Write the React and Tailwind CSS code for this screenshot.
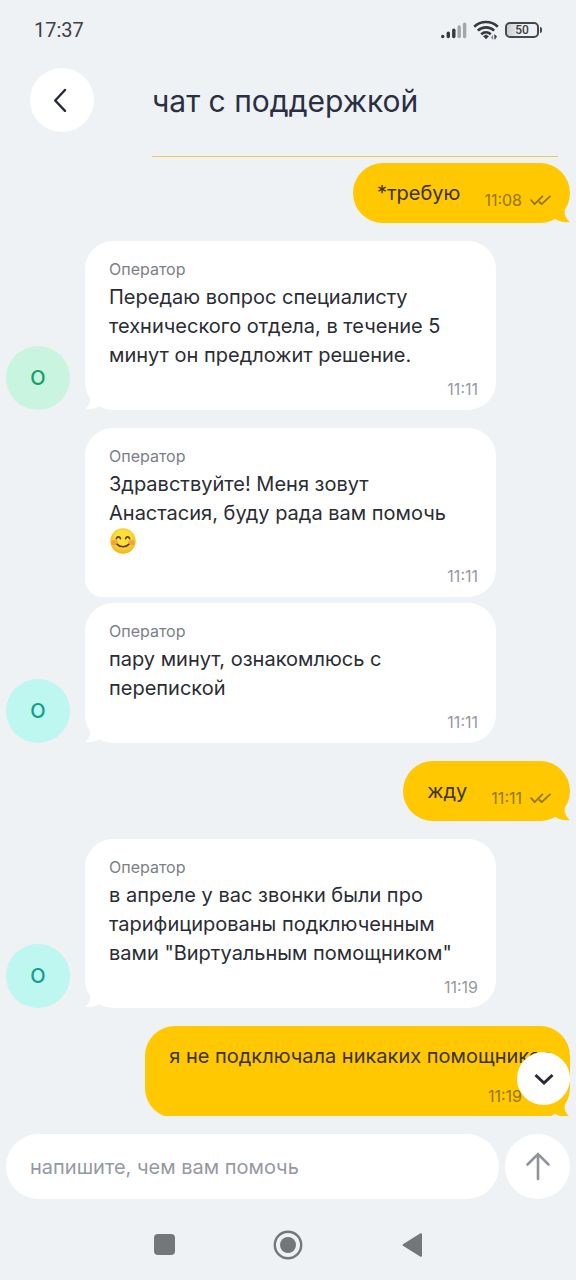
import React from "react";

function StatusBar() {
  return (
    <div className="flex h-15 items-center justify-between px-8.5 text-[#3d4146]">
      <time className="font-[Roboto,sans-serif] text-xl leading-6">17:37</time>
      <div className="flex items-center gap-1.5">
        <svg width="27" height="20" viewBox="0 0 27 20" aria-label="Сигнал" role="img">
          <g strokeWidth="3.4" strokeLinecap="round" stroke="#36393e">
            <path d="M2.7 16.4v.2" />
            <path d="M8.3 13.2v3.4" />
            <path d="M13.8 10.2v6.4" />
          </g>
          <g strokeWidth="3.4" strokeLinecap="round" stroke="#a3a6a9">
            <path d="M19.2 7v9.6" />
            <path d="M24.6 4.2v12.4" />
          </g>
        </svg>
        <svg width="26" height="20" viewBox="0 0 26 20" fill="none" stroke="#36393e" aria-label="Wi-Fi" role="img">
          <g strokeWidth="2.6">
            <path d="M1.2 6.7C7.8.5 18.2.5 24.8 6.7" />
            <path d="M4.8 10.6c4.6-4.3 11.8-4.3 16.4 0" />
            <path d="M8.2 14.2c2.8-2.5 6.8-2.5 9.6 0" />
          </g>
          <path d="M13 14.6l2.9 1.6-2.9 3-2.9-3z" fill="#36393e" stroke="none" />
          <path d="M19.6 15.2v3.4l-1.6-1.7" stroke="#8b8f93" strokeWidth="1.1" />
          <path d="M22 19.2v-3.6l1.6 1.7" strokeWidth="1.3" />
        </svg>
        <div className="flex items-center">
          <div className="flex h-4 w-8.5 items-center justify-center rounded-[5px] border-2 border-[#45494e] bg-linear-to-r from-[#cdd0d3] to-[#eef2f5] to-50% font-[Roboto,sans-serif] text-xs leading-3 font-medium">
            50
          </div>
          <div className="ml-px h-1.5 w-0.5 rounded-r bg-[#45494e]" />
        </div>
      </div>
    </div>
  );
}

function Header() {
  return (
    <header className="flex h-[97px] items-start pl-7.5 pr-4.5">
      <button aria-label="Назад" className="mt-2 flex size-16 shrink-0 items-center justify-center rounded-full bg-white">
        <svg width="24" height="24" viewBox="0 0 24 24" fill="none" stroke="#262b35" strokeWidth="2.4" strokeLinecap="round" strokeLinejoin="round">
          <path d="M15 2 5.200 12.500 15 22.800" />
        </svg>
      </button>
      <div className="ml-14.5 flex h-full flex-1 flex-col border-b border-[#efc853]">
        <h1 className="mt-[21px] text-[30px] leading-10 text-[#2b2f42]">чат с поддержкой</h1>
      </div>
    </header>
  );
}

function Tail({ side }) {
  return side === "right" ? (
    <svg className="absolute right-0 bottom-0" width="16" height="14" viewBox="0 0 16 14">
      <path d="M10.600 1V4.200C11.300 7.800 13.200 10.800 15.800 12.900 11 13.700 6 12.600 2.500 10.400L0 9V1z" fill="#ffc800" />
    </svg>
  ) : (
    <svg className="absolute bottom-0 left-0" width="16" height="14" viewBox="0 0 16 14">
      <path d="M5.400 1V4.200C4.700 7.800 2.800 10.800 .2 12.900 5 13.700 10 12.600 13.500 10.400L16 9V1z" fill="#fff" />
    </svg>
  );
}

function Checks() {
  return (
    <svg width="22" height="12" viewBox="0 0 22 12" fill="none" stroke="currentColor" strokeWidth="1.8" strokeLinecap="round" strokeLinejoin="round" aria-label="Прочитано" role="img">
      <path d="M1.200 6.200 4.600 10.200 12.400 2.400" />
      <path d="M9.400 8 11.700 10.200 20 2.400" />
    </svg>
  );
}

function Smile() {
  return (
    <svg className="ml-px inline-block size-[26px] align-text-bottom" viewBox="0 0 26 26" role="img" aria-label="😊">
      <defs>
        <radialGradient id="face" cx=".5" cy=".4" r=".6">
          <stop offset=".5" stopColor="#fddf36" />
          <stop offset="1" stopColor="#f2b11e" />
        </radialGradient>
      </defs>
      <circle cx="13" cy="13" r="12.700" fill="url(#face)" />
      <ellipse cx="4.600" cy="14.500" rx="3.200" ry="2.800" fill="#f58a3a" opacity=".65" />
      <ellipse cx="21.400" cy="14.500" rx="3.200" ry="2.800" fill="#f58a3a" opacity=".65" />
      <g fill="none" stroke="#5a3a12" strokeWidth="1.700" strokeLinecap="round">
        <path d="M6.400 10.600c.8-2.400 3.200-2.400 4 0" />
        <path d="M15.600 10.600c.8-2.400 3.200-2.400 4 0" />
        <path d="M7.200 16.400c2.900 3.100 8.700 3.100 11.600 0" />
      </g>
    </svg>
  );
}

function OperatorBubble({ time, tail, children }) {
  return (
    <article className={tail ? "relative rounded-[28px] bg-white px-6 pt-4.5 pb-[11px]" : "relative rounded-[28px] rounded-bl-[18px] bg-white px-6 pt-4.5 pb-[11px]"}>
      <div className="text-base leading-5 text-[#7b7f87]">Оператор</div>
      <p className="mt-1 text-xl leading-[29px] whitespace-pre-line text-[#2a2d33]">{children}</p>
      <div className="-mr-1.5 mt-[9px] text-right text-base leading-5 text-[#95999f]">
        <time>{time}</time>
      </div>
      {tail && <Tail side="left" />}
    </article>
  );
}

function OperatorGroup({ tone, children }) {
  return (
    <section className="flex items-end gap-[15px] pr-20 pl-1.5">
      <div className={tone === "green" ? "flex size-16 shrink-0 items-center justify-center rounded-full bg-[#c9f5e0] text-xl font-medium text-[#12a06a]" : "flex size-16 shrink-0 items-center justify-center rounded-full bg-[#bdf7ef] text-xl font-medium text-[#0f9f8c]"}>
        <span className="leading-6">О</span>
      </div>
      <div className="flex min-w-0 flex-1 flex-col gap-1.5">{children}</div>
    </section>
  );
}

function UserBubble({ time, children }) {
  return (
    <article className="relative mr-1.5 flex h-15 items-center self-end rounded-[30px] bg-[#ffc800] pr-4.5 pl-6">
      <p className="text-xl leading-7 text-[#3b3216]">{children}</p>
      <div className="mt-3.5 ml-6 flex items-center gap-2 text-base leading-5 text-[#93760f]">
        <time>{time}</time>
        <Checks />
      </div>
      <Tail side="right" />
    </article>
  );
}

export default function App() {
  return (
    <div className="flex h-dvh flex-col overflow-hidden bg-[#eef2f5] font-[Inter,sans-serif]">
      <StatusBar />
      <Header />
      <main className="relative min-h-0 flex-1 overflow-hidden pt-1.5">
        <div className="flex flex-col gap-4.5">
          <UserBubble time="11:08">*требую</UserBubble>
          <OperatorGroup tone="green">
            <OperatorBubble time="11:11" tail>
              {"Передаю вопрос специалисту\nтехнического отдела, в течение 5\nминут он предложит решение."}
            </OperatorBubble>
          </OperatorGroup>
          <OperatorGroup tone="teal">
            <OperatorBubble time="11:11">
              {"Здравствуйте! Меня зовут\nАнастасия, буду рада вам помочь\n"}
              <Smile />
            </OperatorBubble>
            <OperatorBubble time="11:11" tail>
              {"пару минут, ознакомлюсь с\nперепиской"}
            </OperatorBubble>
          </OperatorGroup>
          <UserBubble time="11:11">жду</UserBubble>
          <OperatorGroup tone="teal">
            <OperatorBubble time="11:19" tail>
              {"в апреле у вас звонки были про\nтарифицированы подключенным\nвами \"Виртуальным помощником\""}
            </OperatorBubble>
          </OperatorGroup>
          <article className="relative mr-1.5 self-end rounded-[30px] bg-[#ffc800] pt-4 pr-4.5 pb-3 pl-6">
            <p className="text-xl leading-7 whitespace-nowrap text-[#3b3216]">я не подключала никаких помощников</p>
            <div className="mt-4 flex items-center justify-end gap-2 text-base leading-5 text-[#93760f]">
              <time>11:19</time>
              <Checks />
            </div>
            <Tail side="right" />
          </article>
        </div>
        <button aria-label="Вниз" className="absolute right-1.5 bottom-[11px] flex size-[53px] items-center justify-center rounded-full bg-white">
          <svg width="24" height="24" viewBox="0 0 24 24" fill="none" stroke="#262b35" strokeWidth="3">
            <path d="M3.500 8 12 16l8.500-8" />
          </svg>
        </button>
      </main>
      <form className="flex gap-1.5 px-1.5 pt-4.5" onSubmit={(e) => e.preventDefault()}>
        <input
          type="text"
          aria-label="Сообщение"
          placeholder="напишите, чем вам помочь"
          className="h-[65px] min-w-0 flex-1 rounded-full bg-white px-6 text-xl text-[#2a2d33] outline-none placeholder:text-[#9599a2]"
        />
        <button aria-label="Отправить" className="flex size-[65px] shrink-0 items-center justify-center rounded-full bg-white">
          <svg width="28" height="30" viewBox="0 0 28 30" fill="none" stroke="#8f939c" strokeWidth="2.600" strokeLinecap="round">
            <path d="M14 27V2M3.500 12.500 14 2 24.500 12.500" />
          </svg>
        </button>
      </form>
      <nav className="flex h-[81px] items-center justify-center gap-24 pt-2.5 text-[#747779]">
        <button aria-label="Недавние" className="flex size-7 items-center justify-center">
          <span className="size-[21px] rounded bg-current" />
        </button>
        <button aria-label="Домой" className="flex size-7 items-center justify-center">
          <svg width="30" height="30" viewBox="0 0 30 30" className="shrink-0">
            <circle cx="15" cy="15" r="13.200" fill="none" stroke="currentColor" strokeWidth="2.400" />
            <circle cx="15" cy="15" r="8" fill="currentColor" />
          </svg>
        </button>
        <button aria-label="Назад в системе" className="flex size-7 items-center justify-center">
          <svg width="22" height="26" viewBox="0 0 22 26">
            <path d="M2.500 13 20 2.200v21.600z" fill="currentColor" stroke="currentColor" strokeWidth="2" strokeLinejoin="round" />
          </svg>
        </button>
      </nav>
    </div>
  );
}
